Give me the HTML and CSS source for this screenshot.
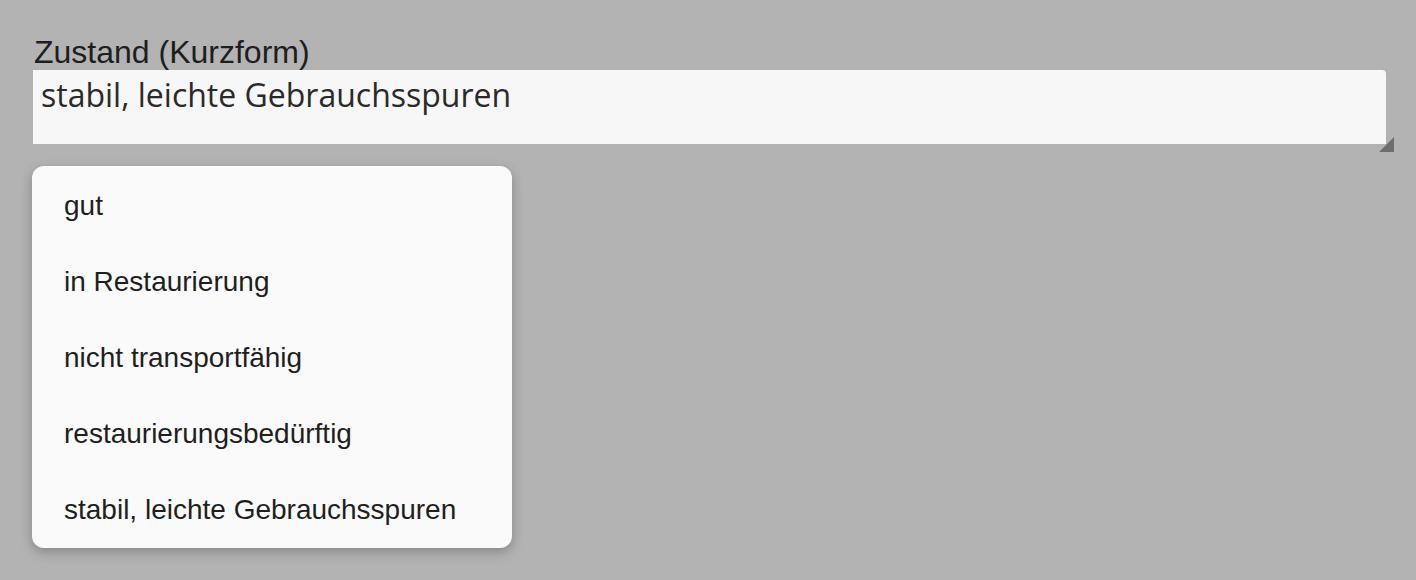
FILE: index.html
```html
<!DOCTYPE html>
<html lang="de">
<head>
<meta charset="utf-8">
<link rel="stylesheet" href="styles.css">
</head>
<body>
<div class="field">
  <label class="label" for="z">Zustand (Kurzform)</label>
  <div class="box">
    <textarea id="z" class="input">stabil, leichte Gebrauchsspuren</textarea>
    <span class="grip"></span>
  </div>
  <ul class="menu">
    <li class="item">gut</li>
    <li class="item">in Restaurierung</li>
    <li class="item">nicht transportfähig</li>
    <li class="item">restaurierungsbedürftig</li>
    <li class="item">stabil, leichte Gebrauchsspuren</li>
  </ul>
</div>
</body>
</html>
```
FILE: styles.css
```css
html, body {
  margin: 0;
  padding: 0;
  background: #b3b3b3;
  height: 100%;
}
body {
  font-family: "Liberation Sans", Arial, sans-serif;
  color: #222;
}
.field {
  padding: 34px 30px 0 33px;
  display: flex;
  flex-direction: column;
}
.label {
  font-size: 32px;
  line-height: 36px;
  margin-left: 1px;
  color: #1e1e1e;
}
.box {
  position: relative;
  width: 1353px;
  height: 74px;
}
.input {
  box-sizing: border-box;
  width: 1353px;
  height: 74px;
  border: none;
  border-radius: 0 4px 0 0;
  background: #f7f7f7;
  resize: none;
  outline: none;
  padding: 6px 8px 5px;
  margin: 0;
  font-family: "Open Sans", "Noto Sans", sans-serif;
  font-size: 32px;
  line-height: 38px;
  color: #2a2a2a;
  display: block;
}
.grip {
  position: absolute;
  right: -8px;
  bottom: -8px;
  width: 0;
  height: 0;
  border-style: solid;
  border-width: 0 0 15px 15px;
  border-color: transparent transparent #6e6e6e transparent;
}
.menu {
  list-style: none;
  margin: 22px 0 0 -1px;
  padding: 1px 0;
  width: 480px;
  background: #fafafa;
  border-radius: 12px;
  box-shadow: 0 4px 12px rgba(0, 0, 0, 0.25);
}
.item {
  box-sizing: border-box;
  height: 76px;
  display: flex;
  align-items: center;
  padding: 2px 0 0 32px;
  font-size: 28px;
  color: #1f1f1f;
}
```
